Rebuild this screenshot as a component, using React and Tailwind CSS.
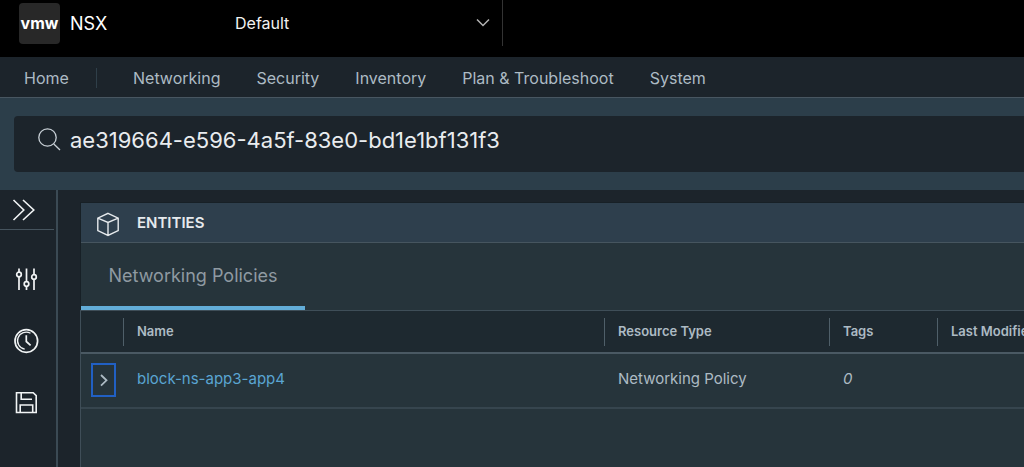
import React from "react";

const navItems = ["Networking", "Security", "Inventory", "Plan & Troubleshoot", "System"];

function Icon({ className, children, strokeWidth = 1.5, viewBox = "0 0 24 24" }) {
  return (
    <svg
      className={className}
      viewBox={viewBox}
      fill="none"
      stroke="currentColor"
      strokeWidth={strokeWidth}
      aria-hidden="true"
    >
      {children}
    </svg>
  );
}

function TopBar() {
  return (
    <header className="flex h-[57px] items-start bg-black text-white">
      <div className="flex w-[235px] shrink-0 items-center gap-2.5 pt-[3px] pl-[19px]">
        <div className="flex size-[41px] items-center justify-center rounded-sm bg-[#282828] pb-0.5 text-base font-bold">
          vmw
        </div>
        <span className="text-lg">NSX</span>
      </div>
      <div className="relative h-[46px] w-[268px] shrink-0 border-r border-[#333333]">
        <select
          aria-label="Project"
          className="h-full w-full appearance-none bg-transparent text-base text-[#f2f2f2] outline-none"
        >
          <option>Default</option>
        </select>
        <Icon
          className="pointer-events-none absolute top-4 right-3 size-3.5 text-[#b3b3b3]"
          viewBox="0 0 14 14"
        >
          <path d="M1 3.5l6 6 6-6" />
        </Icon>
      </div>
    </header>
  );
}

function MainNav() {
  return (
    <nav className="flex h-[41px] items-center border-b border-[#485661] bg-[#1c242b] pt-0.5 pl-6 text-base whitespace-nowrap text-[#adbbc4]">
      <a href="#home" className="w-[72px]">
        Home
      </a>
      <div className="h-5 w-[37px] border-l border-[#2f3f49]" />
      <div className="flex gap-9">
        {navItems.map((item) => (
          <a key={item} href={"#" + item.split(" ")[0].toLowerCase()}>
            {item}
          </a>
        ))}
      </div>
    </nav>
  );
}

function SearchBar() {
  return (
    <div className="bg-[#2c3e4a] py-[18px] pl-3.5">
      <div className="flex h-14 items-center rounded-l-sm bg-[#1c242b] pb-2 pl-6">
        <Icon className="mr-2 size-6 shrink-0 text-[#c8d0d6]" strokeWidth={1.3}>
          <circle cx="9.5" cy="9.5" r="8.7" />
          <path d="M15.8 16L22 22" />
        </Icon>
        <input
          type="text"
          aria-label="Search"
          defaultValue="ae319664-e596-4a5f-83e0-bd1e1bf131f3"
          className="min-w-0 flex-1 bg-transparent text-[22px] text-[#e9ecef] outline-none"
        />
      </div>
    </div>
  );
}

function Sidebar() {
  return (
    <aside className="w-[58px] shrink-0 border-r-2 border-[#3b4a54] text-[#f1f4f5]">
      <button
        type="button"
        aria-label="Expand sidebar"
        className="flex h-10 w-[54px] items-center border-b border-[#46545e] pl-3"
      >
        <Icon className="size-6" strokeWidth={1.6}>
          <path d="M1.5 2l10.3 10L1.5 22M11 2l10.8 10L11 22" />
        </Icon>
      </button>
      <div className="flex flex-col items-center gap-9 pt-9 pr-1">
        <button type="button" aria-label="Filters">
          <Icon className="size-[26px]" viewBox="0 0 26 26" strokeWidth={1.7}>
            <path d="M6 2.500v3.500M6 11V24M13.500 2.500v13.500M13.500 20.500V24M21 2.500v6M21 13.500V24" />
            <circle cx="6" cy="8.500" r="2.300" />
            <circle cx="13.500" cy="18" r="2.300" />
            <circle cx="21" cy="11" r="2.300" />
          </Icon>
        </button>
        <button type="button" aria-label="Recent searches">
          <Icon className="size-[26px]" viewBox="0 0 26 26" strokeWidth={1.7}>
            <circle cx="13.300" cy="13" r="11.300" />
            <path d="M17.500 5.300A8.600 8.600 0 1 0 11.700 21.200" strokeWidth="1.300" />
            <path d="M13.300 7.300v6.200l4.300 3.800" />
          </Icon>
        </button>
        <button type="button" aria-label="Saved searches">
          <Icon className="size-[26px]" viewBox="0 0 26 26" strokeWidth={1.6}>
            <path d="M3.500 2.700h16.700l3 3v16.800H3.500z" />
            <path d="M8.200 2.700v6.600H19M7.200 22.500v-7.500h12.500v7.500" />
          </Icon>
        </button>
      </div>
    </aside>
  );
}

function HeadCell({ children }) {
  return (
    <th scope="col" className="p-0 font-semibold">
      <div className="flex h-7 items-center border-l border-[#4f5f69] pl-[13px]">{children}</div>
    </th>
  );
}

function PolicyTable() {
  return (
    <table className="w-full table-fixed border-collapse text-left whitespace-nowrap text-[#adbbc4]">
      <colgroup>
        <col className="w-[42px]" />
        <col className="w-[481px]" />
        <col className="w-[225px]" />
        <col className="w-[108px]" />
        <col />
      </colgroup>
      <thead>
        <tr className="h-[42px] border-b-2 border-[#4a5963] bg-[#1e2930] text-[13px]">
          <th aria-label="Expand" className="p-0" />
          <HeadCell>Name</HeadCell>
          <HeadCell>Resource Type</HeadCell>
          <HeadCell>Tags</HeadCell>
          <HeadCell>Last Modified</HeadCell>
        </tr>
      </thead>
      <tbody>
        <tr className="h-[55px] border-b-2 border-[#36454e] text-[15px]">
          <td className="p-0 pb-0.5 pl-2.5">
            <button
              type="button"
              aria-label="Expand row"
              className="flex h-[34px] w-[25px] items-center justify-center border-2 border-[#2160c4]"
            >
              <Icon className="h-3.5 w-2.5" viewBox="0 0 10 14" strokeWidth={1.8}>
                <path d="M2 2l5.500 5.300L2 12.600" />
              </Icon>
            </button>
          </td>
          <td className="p-0 pb-0.5 pl-3.5">
            <a href="#policy" className="text-[#5aa5d2]">
              block-ns-app3-app4
            </a>
          </td>
          <td className="p-0 pb-0.5 pl-3.5">Networking Policy</td>
          <td className="p-0 pb-0.5 pl-3.5 italic">0</td>
          <td className="p-0" />
        </tr>
      </tbody>
    </table>
  );
}

function Entities() {
  return (
    <section className="mt-3 ml-[22px] flex min-w-0 flex-1 flex-col overflow-hidden border-t border-[#172026] bg-[#26343b]">
      <div className="border-l border-[#172026]">
        <div className="flex h-10 items-center gap-4 border-b border-[#46555f] bg-[#2e3f4d] pt-0.5 pl-3.5 text-[#e6eaed]">
          <Icon className="size-[26px]" viewBox="0 0 26 26" strokeWidth={1.4}>
            <path d="M13 2.300l10.200 4.800v12.500L13 24.500 2.800 19.600V7.100zM2.800 7.100L13 11.500l10.200-4.400M13 11.500v13" />
          </Icon>
          <h2 className="text-[15px] font-semibold">ENTITIES</h2>
        </div>
        <div className="flex">
          <button
            type="button"
            className="h-[67px] w-56 border-b-4 border-[#62add8] pt-0.5 text-lg text-[#8f9aa2]"
          >
            Networking Policies
          </button>
        </div>
      </div>
      <div className="flex-1 border-t border-l border-[#3f4e58]">
        <PolicyTable />
      </div>
    </section>
  );
}

export default function App() {
  return (
    <div className="flex min-h-screen flex-col overflow-hidden bg-[#1c242b] font-['Inter',sans-serif]">
      <TopBar />
      <MainNav />
      <SearchBar />
      <main className="flex flex-1">
        <Sidebar />
        <Entities />
      </main>
    </div>
  );
}
